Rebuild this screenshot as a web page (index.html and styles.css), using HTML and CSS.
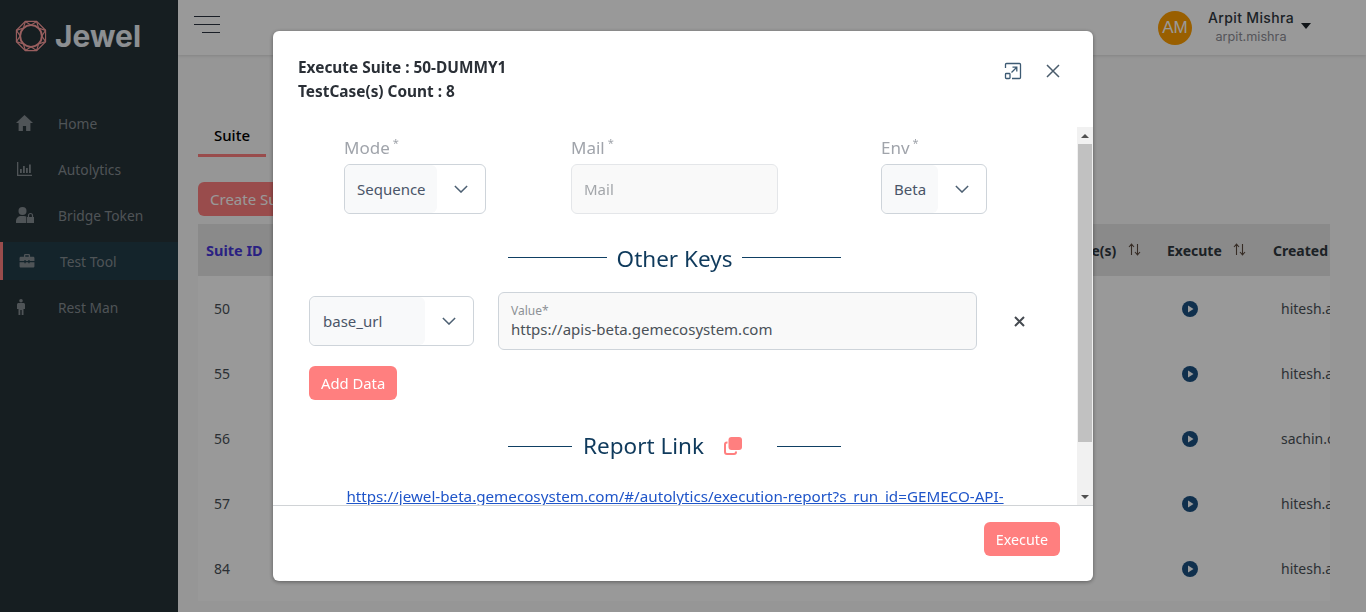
FILE: index.html
```html
<!DOCTYPE html>
<html lang="en">
<head>
  <meta charset="UTF-8">
  <title>Jewel</title>
  <link rel="stylesheet" href="styles.css">
</head>
<body>
  <div class="app">
    <aside class="sidebar">
      <div class="logo">
        <svg class="logo-mark" width="32" height="32" viewBox="0 0 34 34" fill="none" stroke="#ff9e9e" stroke-width="1.2">
          <polygon points="11,1.5 23,1.5 32.5,11 32.5,23 23,32.5 11,32.5 1.5,23 1.5,11"/>
          <circle cx="17" cy="17" r="11.5" stroke-width="2"/>
          <path d="M11 1.500 17 5.500 23 1.500M23 1.500 25 8.500 32.500 11M32.500 11 28.500 17 32.500 23M32.500 23 25 25.500 23 32.500M23 32.500 17 28.500 11 32.500M11 32.500 9 25.500 1.500 23M1.500 23 5.500 17 1.500 11M1.500 11 9 8.500 11 1.500"/>
        </svg>
        <span class="logo-text">Jewel</span>
      </div>
      <nav class="nav">
        <a class="nav-item">
          <svg class="nav-icon" width="18" height="16" viewBox="0 0 18 16"><path d="M8.500 0 0 8h2.600v8h4.300v-5h3.200v5h4.300V8H17z"/></svg>
          <span>Home</span>
        </a>
        <a class="nav-item">
          <svg class="nav-icon" width="18" height="16" viewBox="0 0 18 16"><path d="M1 1h1.300v12.700H16V15H1z"/><path d="M4 8h1.800v4H4zM7 5h1.800v7H7zM10 7h1.800v5H10zM13 3.500h1.800V12H13z"/></svg>
          <span>Autolytics</span>
        </a>
        <a class="nav-item">
          <svg class="nav-icon" width="18" height="16" viewBox="0 0 18 16"><circle cx="6.500" cy="4" r="4"/><path d="M0 16v-2c0-3 2.500-5 5-5h3c1 0 1.700.2 2.300.5V16z"/><path d="M11 10h7v6h-7z"/><path d="M12.500 10V8.500a2 2 0 0 1 4 0V10" fill="none" stroke="#848c91" stroke-width="1.200"/></svg>
          <span>Bridge Token</span>
        </a>
        <a class="nav-item active">
          <svg class="nav-icon" width="16" height="14" viewBox="0 0 18 16"><path d="M5.500 3V1.500C5.500.7 6.200 0 7 0h4c.8 0 1.500.7 1.500 1.500V3H16c1 0 1.500.7 1.500 1.500V8H12V6.800h-1.500V8h-3V6.800H6V8H.5V4.500C.5 3.700 1 3 2 3zM7 1.500V3h4V1.500zM.5 9.500H6v1.200h1.500V9.500h3v1.200H12V9.500h5.500V14c0 1-.7 1.500-1.500 1.500H2c-1 0-1.500-.7-1.500-1.500z"/></svg>
          <span>Test Tool</span>
        </a>
        <a class="nav-item">
          <svg class="nav-icon" width="18" height="16" viewBox="0 0 18 16"><circle cx="5" cy="1.800" r="1.800"/><path d="M2.500 4h5C8.300 4 9 4.700 9 5.500V10H7.500v6H5.700v-5H4.300v5H2.500v-6H1V5.500C1 4.700 1.700 4 2.500 4z"/></svg>
          <span>Rest Man</span>
        </a>
      </nav>
    </aside>

    <div class="main">
      <header class="topbar">
        <button class="burger" aria-label="Menu"><i></i><i></i><i class="short"></i></button>
        <div class="user">
          <div class="avatar">AM</div>
          <div class="user-info">
            <div class="user-name">Arpit Mishra</div>
            <div class="user-id">arpit.mishra</div>
          </div>
          <div class="caret"></div>
        </div>
      </header>

      <section class="content">
        <div class="tabs"><div class="tab">Suite</div></div>
        <button class="create-btn">Create Suite</button>
        <div class="table-wrap">
          <table class="data-table">
            <colgroup>
              <col class="col-id"><col><col class="col-count"><col class="col-exec"><col class="col-created">
            </colgroup>
            <thead>
              <tr>
                <th class="sorted">Suite ID</th>
                <th></th>
                <th class="th-right">TestCase(s) <svg class="sort" width="13" height="13" viewBox="0 0 13 13"><path d="M3.500 12V1.500M1 4l2.500-2.800L6 4M9.500 1v10.500M7 9l2.500 2.800L12 9"/></svg></th>
                <th>Execute <svg class="sort" width="13" height="13" viewBox="0 0 13 13"><path d="M3.500 12V1.500M1 4l2.500-2.800L6 4M9.500 1v10.500M7 9l2.500 2.800L12 9"/></svg></th>
                <th>Created By</th>
              </tr>
            </thead>
            <tbody>
              <tr><td>50</td><td></td><td></td><td class="play-cell"><svg class="play" width="16" height="16" viewBox="0 0 16 16"><circle cx="8" cy="8" r="8"/><path d="M6 4.500v7L11.500 8z" fill="#fff"/></svg></td><td>hitesh.agrawal</td></tr>
              <tr><td>55</td><td></td><td></td><td class="play-cell"><svg class="play" width="16" height="16" viewBox="0 0 16 16"><circle cx="8" cy="8" r="8"/><path d="M6 4.500v7L11.500 8z" fill="#fff"/></svg></td><td>hitesh.agrawal</td></tr>
              <tr><td>56</td><td></td><td></td><td class="play-cell"><svg class="play" width="16" height="16" viewBox="0 0 16 16"><circle cx="8" cy="8" r="8"/><path d="M6 4.500v7L11.500 8z" fill="#fff"/></svg></td><td>sachin.chauhan</td></tr>
              <tr><td>57</td><td></td><td></td><td class="play-cell"><svg class="play" width="16" height="16" viewBox="0 0 16 16"><circle cx="8" cy="8" r="8"/><path d="M6 4.500v7L11.500 8z" fill="#fff"/></svg></td><td>hitesh.agrawal</td></tr>
              <tr><td>84</td><td></td><td></td><td class="play-cell"><svg class="play" width="16" height="16" viewBox="0 0 16 16"><circle cx="8" cy="8" r="8"/><path d="M6 4.500v7L11.500 8z" fill="#fff"/></svg></td><td>hitesh.agrawal</td></tr>
            </tbody>
          </table>
        </div>
      </section>
    </div>
  </div>

  <div class="overlay">
    <div class="modal">
      <div class="modal-head">
        <div class="modal-title">
          <div>Execute Suite : 50-DUMMY1</div>
          <div>TestCase(s) Count : 8</div>
        </div>
        <div class="modal-tools">
          <svg width="18" height="18" viewBox="0 0 18 18" fill="none" stroke="#3d5a73" stroke-width="1.300">
            <path d="M1.500 6V2.500a1 1 0 0 1 1-1h13a1 1 0 0 1 1 1v13a1 1 0 0 1-1 1H8"/>
            <rect x="1.500" y="11.500" width="4.500" height="5" rx=".8"/>
            <path d="M7.500 10.500 12.500 5.500M8.500 5.200h4.300v4.300"/>
          </svg>
          <svg width="14" height="14" viewBox="0 0 14 14" fill="none" stroke="#4a5c6c" stroke-width="1.500"><path d="M1 1l12 12M13 1 1 13"/></svg>
        </div>
      </div>

      <div class="modal-mid">
        <div class="modal-body">
          <div class="field-row">
            <div class="field field-mode">
              <label class="field-label">Mode<sup>*</sup></label>
              <div class="select select-mode">
                <span class="select-value">Sequence</span>
                <svg class="chevron" width="14" height="8" viewBox="0 0 16 9"><path d="M1 1l7 7 7-7"/></svg>
              </div>
            </div>
            <div class="field field-mail">
              <label class="field-label">Mail<sup>*</sup></label>
              <div class="mail-input">Mail</div>
            </div>
            <div class="field field-env">
              <label class="field-label">Env<sup>*</sup></label>
              <div class="select select-env">
                <span class="select-value">Beta</span>
                <svg class="chevron" width="14" height="8" viewBox="0 0 16 9"><path d="M1 1l7 7 7-7"/></svg>
              </div>
            </div>
          </div>

          <h3 class="divider-title keys-title">Other Keys</h3>

          <div class="key-row">
            <div class="select select-key">
              <span class="select-value">base_url</span>
              <svg class="chevron" width="14" height="8" viewBox="0 0 16 9"><path d="M1 1l7 7 7-7"/></svg>
            </div>
            <div class="value-input">
              <div class="value-label">Value*</div>
              <div class="value-text">https://apis-beta.gemecosystem.com</div>
            </div>
            <svg class="remove" width="11" height="11" viewBox="0 0 11 11"><path d="M1 1l9 9M10 1l-9 9"/></svg>
          </div>

          <button class="coral-btn add-btn">Add Data</button>

          <h3 class="divider-title report-title">
            Report Link
            <svg class="copy" width="18" height="18" viewBox="0 0 18 18">
              <rect x="4.500" y="0" width="13.500" height="13" rx="3" fill="#ff7f7f"/>
              <path d="M3.500 5.500H3A2 2 0 0 0 1 7.500V15a2 2 0 0 0 2 2h7a2 2 0 0 0 2-2v-.5" fill="none" stroke="#ff7f7f" stroke-width="2"/>
            </svg>
          </h3>

          <a class="report-url" href="#">https://jewel-beta.gemecosystem.com/#/autolytics/execution-report?s_run_id=GEMECO-API-BETA</a>
        </div>

        <div class="scrollbar">
          <div class="scroll-btn"><i class="arrow-up"></i></div>
          <div class="scroll-track"><div class="scroll-thumb"></div></div>
          <div class="scroll-btn"><i class="arrow-down"></i></div>
        </div>
      </div>

      <div class="modal-foot">
        <button class="coral-btn">Execute</button>
      </div>
    </div>
  </div>
</body>
</html>
```

FILE: styles.css
```css
* {
  box-sizing: border-box;
}

html, body {
  height: 100%;
  margin: 0;
  overflow: hidden;
}

body {
  font-family: "Noto Sans", "Open Sans", sans-serif;
  font-size: 15px;
  background-color: #fafafa;
  color: #30383f;
}

.app {
  display: flex;
  height: 100vh;
}

/* sidebar */
.sidebar {
  width: 178px;
  flex-shrink: 0;
  background-color: #263238;
}

.logo {
  display: flex;
  align-items: center;
  height: 72px;
  padding-left: 15px;
  gap: 8px;
}

.logo-text {
  font-family: Inter, "Liberation Sans", sans-serif;
  font-size: 30px;
  font-weight: 700;
  color: #e9eef3;
}

.nav {
  margin-top: 32px;
}

.nav-item {
  display: flex;
  align-items: center;
  height: 38px;
  margin-bottom: 8px;
  padding-left: 16px;
  gap: 24px;
  color: #848c91;
  font-size: 13.8px;
}

.nav-item.active {
  background-color: #223c49;
  border-left: 3px solid #ff7f7f;
  gap: 25px;
}

.nav-icon {
  fill: #848c91;
  flex-shrink: 0;
}

/* topbar */
.main {
  flex: 1;
  min-width: 0;
}

.topbar {
  display: flex;
  justify-content: space-between;
  align-items: center;
  height: 55px;
  background-color: #fff;
  box-shadow: 0 1px 3px rgba(0, 0, 0, 0.12);
  padding-right: 55px;
}

.burger {
  display: flex;
  flex-direction: column;
  align-items: flex-end;
  gap: 6.5px;
  width: 26px;
  margin: -6px 0 0 16px;
  padding: 0;
  background: none;
  border: none;
}

.burger i {
  display: block;
  width: 26px;
  height: 1.5px;
  background-color: #2a3340;
}

.burger i.short {
  width: 18px;
}

.user {
  display: flex;
  align-items: center;
}

.avatar {
  width: 34px;
  height: 34px;
  border-radius: 50%;
  background-color: #ff9f00;
  color: #fff;
  font-family: "Liberation Sans", sans-serif;
  font-size: 17px;
  line-height: 34px;
  text-align: center;
  margin-right: 16px;
}

.user-info {
  text-align: center;
  font-family: Inter, sans-serif;
}

.user-name {
  font-size: 14px;
  font-weight: 500;
  letter-spacing: 0.35px;
  line-height: 18px;
  color: #30383f;
}

.user-id {
  font-size: 12.7px;
  line-height: 19px;
  color: #8d8d95;
}

.caret {
  width: 0;
  height: 0;
  margin: 0 0 3px 7px;
  border-left: 5.5px solid transparent;
  border-right: 5.5px solid transparent;
  border-top: 6px solid #1c2228;
}

/* page behind the dialog */
.content {
  padding: 60px 36px 0 20px;
}

.tabs {
  height: 42px;
}

.tab {
  width: 68px;
  height: 42px;
  line-height: 40px;
  text-align: center;
  font-weight: 500;
  color: #000;
  border-bottom: 3px solid #ff7f7f;
}

.create-btn {
  display: block;
  height: 34px;
  width: 130px;
  margin-top: 25px;
  padding: 0 12px;
  border: none;
  border-radius: 6px;
  background-color: #ff7f7f;
  color: #fff;
  font: inherit;
  text-align: left;
}

.table-wrap {
  margin-top: 8px;
  overflow: hidden;
}

.data-table {
  border-collapse: collapse;
  table-layout: fixed;
  width: 1210px;
}

.col-id {
  width: 90px;
}

.col-count {
  width: 160px;
}

.col-exec {
  width: 106px;
}

.col-created {
  width: 143px;
}

.data-table th {
  height: 52px;
  padding: 0 8px;
  background-color: #e6e6e6;
  color: #30383f;
  text-align: left;
  font-size: 14px;
  font-weight: 700;
  white-space: nowrap;
}

.data-table th.sorted {
  color: #4737d9;
  font-size: 14.5px;
}

.data-table .th-right {
  text-align: right;
  padding-right: 18px;
}

.data-table td {
  height: 65px;
  padding: 0 16px;
  background-color: #fff;
  color: #4a5158;
  font-size: 14px;
  white-space: nowrap;
}

.play-cell .play {
  display: block;
  margin-left: 7px;
}

.play {
  fill: #1b5080;
}

.sort {
  margin-left: 8px;
  vertical-align: 0;
  fill: none;
  stroke: #5b4a3f;
  stroke-width: 1.1;
}

/* dialog */
.overlay {
  position: fixed;
  inset: 0;
  display: flex;
  justify-content: center;
  align-items: flex-start;
  padding-top: 31px;
  background-color: rgba(0, 0, 0, 0.4);
}

.modal {
  display: flex;
  flex-direction: column;
  width: 820px;
  height: 550px;
  background-color: #fff;
  border-radius: 6px;
  box-shadow: 0 1px 4px rgba(0, 0, 0, 0.4);
  overflow: hidden;
}

.modal-head {
  display: flex;
  justify-content: space-between;
  height: 96px;
  flex-shrink: 0;
  padding: 25px 33px 0 25px;
}

.modal-title {
  font-size: 15.4px;
  font-weight: 700;
  line-height: 24px;
  color: #2a2f36;
}

.modal-tools {
  display: flex;
  align-items: flex-start;
  gap: 24px;
  padding-top: 6px;
}

.modal-tools svg:last-child {
  margin-top: 2px;
}

.modal-mid {
  display: flex;
  flex: 1;
  min-height: 0;
}

.modal-body {
  flex: 1;
  min-width: 0;
  overflow: hidden;
  padding-top: 10px;
}

.scrollbar {
  display: flex;
  flex-direction: column;
  width: 16px;
  background-color: #f1f1f1;
}

.scroll-btn {
  display: flex;
  justify-content: center;
  align-items: center;
  height: 17px;
}

.scroll-track {
  flex: 1;
}

.scroll-thumb {
  height: 298px;
  margin: 0 1px;
  background-color: #c1c1c1;
}

.arrow-up {
  border-left: 4px solid transparent;
  border-right: 4px solid transparent;
  border-bottom: 4px solid #505050;
}

.arrow-down {
  border-left: 4px solid transparent;
  border-right: 4px solid transparent;
  border-top: 4px solid #505050;
}

.field-row {
  display: flex;
  padding-left: 71px;
}

.field-mode {
  width: 227px;
}

.field-mail {
  width: 310px;
}

.field-label {
  display: block;
  height: 27px;
  line-height: 22px;
  font-size: 17px;
  color: #a0a4ab;
}

.field-label sup {
  font-size: 11px;
  line-height: 0;
  margin-left: 3px;
}

.select {
  display: flex;
  align-items: center;
  height: 50px;
  background-color: #fff;
  border: 1px solid #ced4da;
  border-radius: 6px;
  overflow: hidden;
  color: #4a5568;
}

.select-value {
  display: flex;
  align-items: center;
  height: 100%;
  padding-left: 12px;
  background-color: #f8f9fa;
  flex-shrink: 0;
  border-radius: 6px;
}

.chevron {
  margin-left: 17px;
  fill: none;
  stroke: #4d6073;
  stroke-width: 1.7;
}

.select-mode {
  width: 142px;
}

.select-mode .select-value {
  width: 92px;
}

.select-env {
  width: 106px;
}

.select-env .select-value {
  width: 56px;
}

.select-key {
  width: 165px;
}

.select-key .select-value {
  width: 115px;
  padding-left: 13px;
}

.mail-input {
  display: flex;
  align-items: center;
  width: 207px;
  height: 50px;
  padding-left: 12px;
  background-color: #f9f9f9;
  border: 1px solid #e4e6e9;
  border-radius: 6px;
  color: #a3a6aa;
}

.divider-title {
  display: flex;
  align-items: center;
  justify-content: center;
  width: 333px;
  height: 32px;
  margin-left: 235px;
  margin-bottom: 0;
  font-size: 22.5px;
  font-weight: 400;
  color: #0f3a5c;
}

.divider-title::before,
.divider-title::after {
  content: "";
  flex: 1;
  height: 1px;
  background-color: #0f3f63;
}

.keys-title {
  margin-top: 28px;
  gap: 10px;
}

.keys-title::before,
.keys-title::after {
  margin-top: -2px;
}

.report-title {
  margin-top: 29px;
  gap: 11px;
}

.report-title::before,
.report-title::after {
  margin-top: 2px;
}

.copy {
  margin: 2px 24px 0 9px;
}

.key-row {
  display: flex;
  align-items: center;
  margin-top: 18px;
  padding-left: 36px;
}

.value-input {
  width: 479px;
  height: 58px;
  margin-left: 24px;
  padding: 9px 12px 0;
  background-color: #f9f9f9;
  border: 1px solid #ced4da;
  border-radius: 6px;
}

.value-label {
  font-size: 12px;
  line-height: 18px;
  color: #8d9196;
}

.value-text {
  margin-top: -1px;
  line-height: 20px;
  font-size: 15px;
  color: #4a5158;
}

.remove {
  margin: 0 0 0 37px;
  fill: none;
  stroke: #454a50;
  stroke-width: 2;
}

.coral-btn {
  height: 34px;
  padding: 0 12px;
  background-color: #ff7f7f;
  color: #fff;
  border: none;
  border-radius: 6px;
  font: inherit;
}

.add-btn {
  display: block;
  margin: 16px 0 0 36px;
  font-size: 14.8px;
}

.report-url {
  display: block;
  width: 664px;
  margin: 23px auto 0;
  line-height: 24px;
  font-size: 15.2px;
  text-align: center;
  color: #1f55c9;
}

.modal-foot {
  display: flex;
  justify-content: flex-end;
  align-items: flex-start;
  height: 76px;
  flex-shrink: 0;
  padding: 16px 33px 0 0;
  border-top: 1px solid #d0d3d6;
}

.modal-foot .coral-btn {
  font-size: 14.3px;
}
```
